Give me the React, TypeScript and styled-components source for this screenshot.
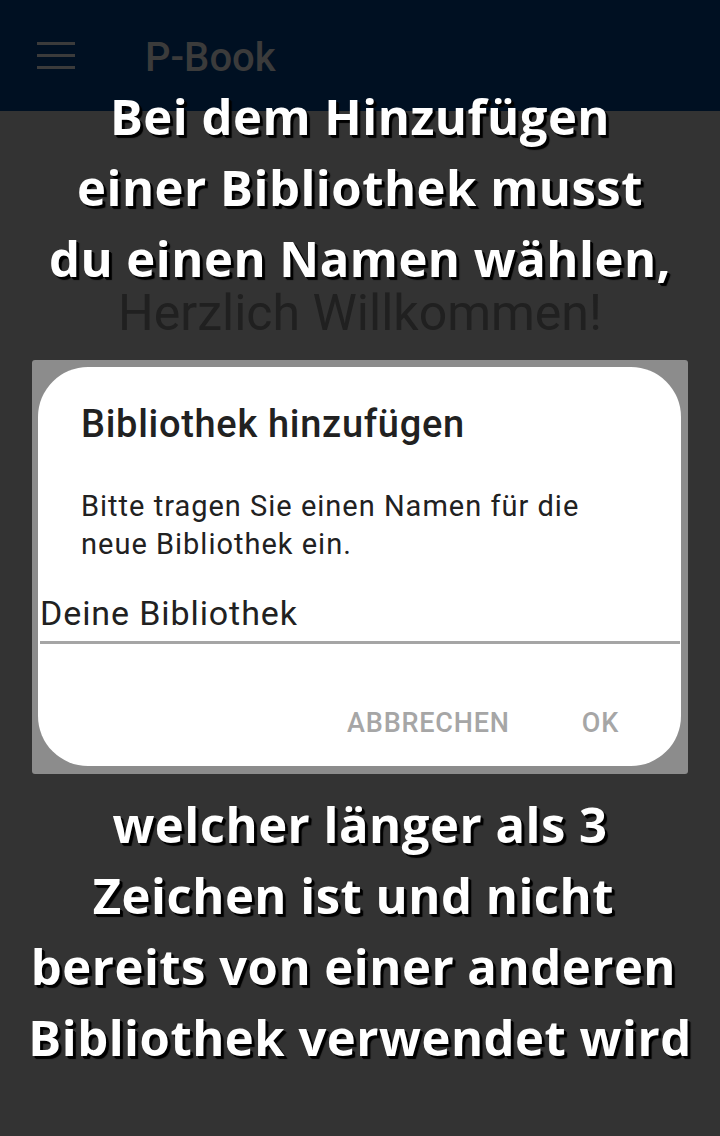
import React from "react";
import styled, { createGlobalStyle } from "styled-components";

const Global = createGlobalStyle`
  html, body { margin: 0; padding: 0; background: #333333; }
  body { width: 720px; height: 1136px; overflow: hidden; font-family: Roboto, "Noto Sans", sans-serif; }
  #root { width: 720px; height: 1136px; }
`;

const Screen = styled.div`
  position: relative;
  width: 720px;
  height: 1136px;
  background: #333333;
  overflow: hidden;
`;

const AppBar = styled.header`
  height: 111px;
  background: #001022;
  display: flex;
  align-items: center;
  padding-left: 37px;
  gap: 70px;
  box-sizing: border-box;
`;

const MenuIcon = styled.div`
  width: 38px;
  display: flex;
  flex-direction: column;
  gap: 9px;
  margin-top: -1px;
  span {
    display: block;
    height: 3px;
    background: #3b3b3b;
  }
`;

const AppTitle = styled.div`
  font-family: Roboto, sans-serif;
  font-weight: 500;
  font-size: 40px;
  color: #3b3b3b;
  margin-top: 4px;
`;

const Welcome = styled.h1`
  margin: 0;
  padding-top: 172px;
  text-align: center;
  font-family: Roboto, sans-serif;
  font-weight: 400;
  font-size: 50px;
  line-height: 60px;
  color: #202020;
`;

const Overlay = styled.div`
  position: absolute;
  inset: 0;
  display: flex;
  flex-direction: column;
  align-items: center;
`;

const Caption = styled.div<{ $top: number }>`
  margin-top: ${(p) => p.$top}px;
  width: 720px;
  text-align: center;
  font-family: "Open Sans", "Noto Sans", sans-serif;
  font-weight: 700;
  font-size: 49px;
  letter-spacing: 0.5px;
  line-height: 71px;
  color: #ffffff;
  text-shadow: 3px 3px 1px #000, 2px 2px 0 #000;
  white-space: pre;
`;

const DialogFrame = styled.div`
  margin-top: 66px;
  width: 656px;
  height: 414px;
  box-sizing: border-box;
  background: #8c8c8c;
  border-radius: 3px;
  padding: 7px 7px 8px 6px;
`;

const Dialog = styled.div`
  height: 100%;
  background: #ffffff;
  border-radius: 50px;
  display: flex;
  flex-direction: column;
  overflow: hidden;
`;

const DialogTitle = styled.div`
  padding: 35px 0 0 43px;
  font-family: Roboto, sans-serif;
  font-weight: 500;
  font-size: 38px;
  letter-spacing: 0.7px;
  line-height: 44px;
  color: #212121;
`;

const DialogMessage = styled.div`
  padding: 41px 50px 0 43px;
  font-family: Roboto, sans-serif;
  font-size: 29px;
  letter-spacing: 1px;
  line-height: 38px;
  color: #212121;
`;

const Field = styled.div`
  margin: 30px 1px 0 2px;
  font-family: Roboto, sans-serif;
  font-size: 34px;
  letter-spacing: 0.9px;
  line-height: 40px;
  color: #212121;
  padding-bottom: 8px;
  border-bottom: 3px solid #a5a5a5;
`;

const Actions = styled.div`
  margin-top: auto;
  display: flex;
  justify-content: flex-end;
  gap: 72px;
  padding: 0 62px 27px 0;
`;

const ActionButton = styled.span`
  font-family: Roboto, sans-serif;
  font-weight: 500;
  font-size: 27px;
  letter-spacing: 0.8px;
  line-height: 32px;
  color: #a6a6a6;
  text-transform: uppercase;
`;

export default function App() {
  return (
    <>
      <Global />
      <Screen>
        <AppBar>
          <MenuIcon>
            <span />
            <span />
            <span />
          </MenuIcon>
          <AppTitle>P-Book</AppTitle>
        </AppBar>
        <Welcome>Herzlich Willkommen!</Welcome>
        <Overlay>
          <Caption $top={81}>
            {"Bei dem Hinzufügen\neiner Bibliothek musst\ndu einen Namen wählen,"}
          </Caption>
          <DialogFrame>
            <Dialog>
              <DialogTitle>Bibliothek hinzufügen</DialogTitle>
              <DialogMessage>Bitte tragen Sie einen Namen für die neue Bibliothek ein.</DialogMessage>
              <Field>Deine Bibliothek</Field>
              <Actions>
                <ActionButton>Abbrechen</ActionButton>
                <ActionButton>OK</ActionButton>
              </Actions>
            </Dialog>
          </DialogFrame>
          <Caption $top={15}>
            {"welcher länger als 3\nZeichen ist und nicht \nbereits von einer anderen \nBibliothek verwendet wird"}
          </Caption>
        </Overlay>
      </Screen>
    </>
  );
}
